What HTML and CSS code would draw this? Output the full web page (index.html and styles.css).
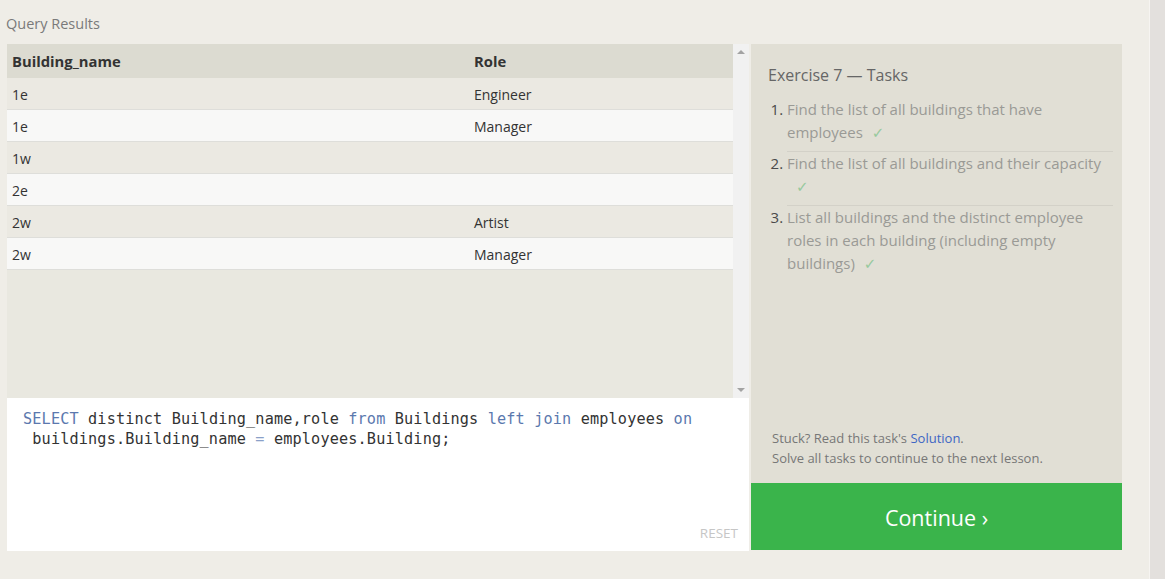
FILE: index.html
```html
<!DOCTYPE html>
<html>
<head>
<meta charset="utf-8">
<link rel="stylesheet" href="styles.css">
</head>
<body>
<div class="page">
  <div class="title">Query Results</div>
  <div class="workspace">
    <div class="left">
      <div class="results">
        <div class="table-area">
          <table class="grid">
            <thead>
              <tr><th class="c1">Building_name</th><th>Role</th></tr>
            </thead>
            <tbody>
              <tr class="odd"><td>1e</td><td>Engineer</td></tr>
              <tr class="even"><td>1e</td><td>Manager</td></tr>
              <tr class="odd"><td>1w</td><td></td></tr>
              <tr class="even"><td>2e</td><td></td></tr>
              <tr class="odd"><td>2w</td><td>Artist</td></tr>
              <tr class="even"><td>2w</td><td>Manager</td></tr>
            </tbody>
          </table>
        </div>
        <div class="scrollbar">
          <span class="arrow up"></span>
          <span class="arrow down"></span>
        </div>
      </div>
      <div class="editor">
        <div class="code"><span class="kw">SELECT</span> distinct Building_name,role <span class="kw">from</span> Buildings <span class="kw">left</span> <span class="kw">join</span> employees <span class="kw">on</span><br>&nbsp;buildings.Building_name <span class="op">=</span> employees.Building;</div>
        <div class="reset">RESET</div>
      </div>
    </div>
    <div class="right">
      <div class="tasks">
        <div class="tasks-title">Exercise 7 — Tasks</div>
        <ol class="task-list">
          <li>Find the list of all buildings that have employees<span class="check">✓</span></li>
          <li>Find the list of all buildings and their capacity <span class="check">✓</span></li>
          <li>List all buildings and the distinct employee roles in each building (including empty buildings)<span class="check">✓</span></li>
        </ol>
        <div class="stuck">
          <div>Stuck? Read this task's <a class="link">Solution</a>.</div>
          <div>Solve all tasks to continue to the next lesson.</div>
        </div>
      </div>
      <div class="continue">Continue ›</div>
    </div>
  </div>
</div>
<div class="side-strip"></div>
</body>
</html>
```
FILE: styles.css
```css
html, body {
  margin: 0;
  padding: 0;
  height: 579px;
  overflow: hidden;
}
body {
  display: flex;
  background: #efede7;
  font-family: "Open Sans", "Noto Sans", sans-serif;
  color: #333;
}
.page {
  flex: 1;
  padding: 0 0 0 7px;
}
.side-strip {
  width: 15px;
  background: #e3e0dd;
  border-left: 1px solid #f6f4f1;
}
.title {
  height: 44px;
  box-sizing: border-box;
  padding-top: 14px;
  margin-left: -1px;
  font-size: 14.5px;
  color: #7a7a7a;
}
.workspace {
  display: flex;
  gap: 2px;
}
.left {
  width: 742px;
  display: flex;
  flex-direction: column;
}
.results {
  display: flex;
  height: 354px;
  background: #e9e8e0;
}
.table-area {
  flex: 1;
}
.grid {
  width: 100%;
  border-collapse: collapse;
  font-size: 14px;
}
.grid th {
  background: #dcdbd1;
  height: 34px;
  text-align: left;
  font-weight: 700;
  font-size: 14.8px;
  color: #333;
  padding: 0 0 0 5px;
}
.grid th.c1 {
  width: 457px;
}
.grid td {
  height: 30px;
  padding: 1px 0 0 5px;
  border-bottom: 1px solid #dededa;
  color: #333;
}
.grid tr.odd td {
  background: #ebe9e2;
}
.grid tr.even td {
  background: #f8f8f7;
}
.scrollbar {
  width: 16px;
  background: #f1f1f1;
  display: flex;
  flex-direction: column;
  justify-content: space-between;
  align-items: center;
  padding: 6px 0 6px;
  box-sizing: border-box;
}
.arrow {
  width: 0;
  height: 0;
  border-left: 4px solid transparent;
  border-right: 4px solid transparent;
}
.arrow.up {
  border-bottom: 4px solid #a3a3a3;
}
.arrow.down {
  border-top: 4px solid #a3a3a3;
}
.editor {
  height: 153px;
  background: #fff;
  display: flex;
  flex-direction: column;
  justify-content: space-between;
  box-sizing: border-box;
  padding: 11px 11px 9px 16px;
}
.code {
  font-family: "DejaVu Sans Mono", "Liberation Mono", monospace;
  font-size: 15.2px;
  line-height: 20px;
  color: #333;
  letter-spacing: 0.15px;
}
.kw {
  color: #5b78ae;
}
.op {
  color: #8aa0c8;
}
.reset {
  align-self: flex-end;
  font-size: 13.5px;
  color: #c6c6c6;
}
.right {
  width: 371px;
  display: flex;
  flex-direction: column;
}
.tasks {
  height: 439px;
  background: #e1dfd5;
  box-sizing: border-box;
  padding: 20px 9px 0 17px;
  display: flex;
  flex-direction: column;
}
.tasks-title {
  font-size: 16px;
  color: #666;
  margin-bottom: 12px;
}
.task-list {
  margin: 0;
  padding: 0 0 0 19px;
  font-size: 15px;
  line-height: 23px;
  color: #9a9a95;
}
.task-list li {
  padding: 0 0 7px;
  margin-bottom: 0;
  border-bottom: 1px solid #d3d1c8;
}
.task-list li:last-child {
  border-bottom: none;
}
.task-list li::marker {
  color: #4a4a4a;
}
.check {
  display: inline-block;
  font-family: "DejaVu Sans", sans-serif;
  font-size: 15px;
  line-height: 1;
  color: #97c99d;
  margin-left: 9px;
}
.stuck {
  margin-top: auto;
  margin-bottom: 15px;
  padding-left: 4px;
  font-size: 13px;
  line-height: 20px;
  color: #777;
}
.link {
  color: #3d66c4;
}
.continue {
  height: 67px;
  background: #3ab44b;
  color: #fff;
  font-size: 21.5px;
  display: flex;
  align-items: center;
  justify-content: center;
  padding-top: 1px;
  box-sizing: border-box;
}
```
